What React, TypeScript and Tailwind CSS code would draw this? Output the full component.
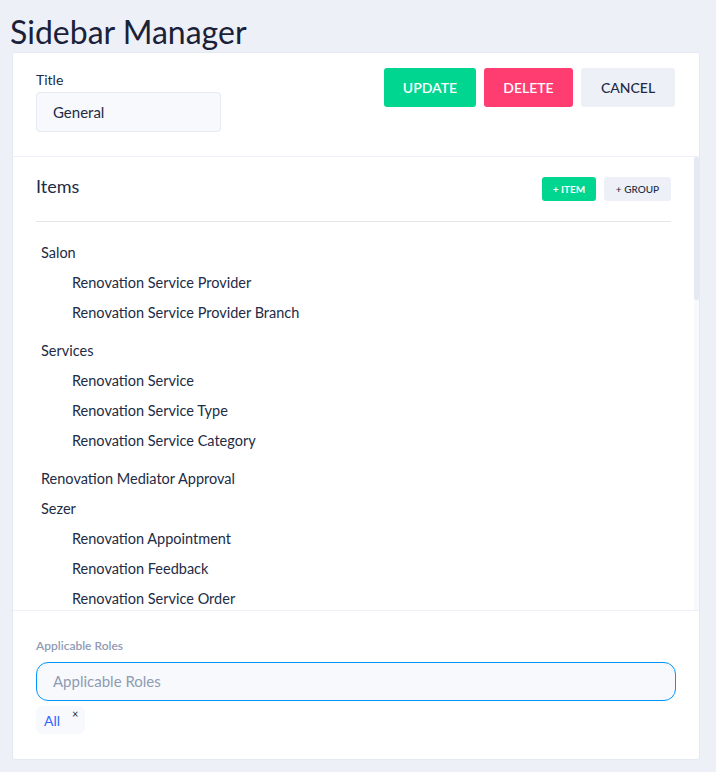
import React from 'react';

type Entry = { label: string; children?: string[] };

const entries: Entry[] = [
  { label: 'Salon', children: ['Renovation Service Provider', 'Renovation Service Provider Branch'] },
  { label: 'Services', children: ['Renovation Service', 'Renovation Service Type', 'Renovation Service Category'] },
  { label: 'Renovation Mediator Approval' },
  { label: 'Sezer', children: ['Renovation Appointment', 'Renovation Feedback', 'Renovation Service Order'] },
];

export default function App() {
  return (
    <div
      className="min-h-screen bg-[#edf0f7] pb-[14px] text-[#222b45]"
      style={{ fontFamily: 'Lato, "Open Sans", sans-serif' }}
    >
      <h1 className="pl-[10px] pt-[12px] text-[32px] leading-[40px] text-[#1a2138]">Sidebar Manager</h1>

      <div className="ml-[12px] mr-[16px] w-[688px] rounded-[3px] border border-[#e4e9f2] bg-white">
        {/* header */}
        <div className="flex items-start justify-between border-b border-[#edf1f7] px-[23px] pb-[24px] pt-[15px]">
          <div>
            <label className="block text-[14px] leading-[24px] text-[#222b45]">Title</label>
            <div className="flex h-[40px] w-[185px] items-center rounded-[4px] border border-[#e4e9f2] bg-[#f7f9fc] px-[16px] text-[15px]">
              General
            </div>
          </div>
          <div className="flex gap-[8px] pr-[1px]">
            <button className="h-[39px] w-[92px] rounded-[3px] bg-[#00d68f] text-[14px] font-semibold text-white">UPDATE</button>
            <button className="h-[39px] w-[89px] rounded-[3px] bg-[#ff3d71] text-[14px] font-semibold text-white">DELETE</button>
            <button className="h-[39px] w-[94px] rounded-[3px] bg-[#edf1f7] text-[14px] font-medium text-[#222b45]">CANCEL</button>
          </div>
        </div>

        {/* items */}
        <div className="relative h-[453px] overflow-hidden">
          <div className="pl-[23px] pr-[28px] pt-[20px]">
            <div className="flex items-start justify-between border-b border-[#e4e6ea] pb-[20px]">
              <h2 className="text-[18px] leading-[18px]">Items</h2>
              <div className="flex gap-[8px]">
                <button className="h-[24px] w-[54px] rounded-[3px] bg-[#00d68f] text-[10px] font-bold text-white">+ ITEM</button>
                <button className="h-[24px] w-[67px] rounded-[3px] bg-[#edf1f7] text-[10px] font-medium text-[#222b45]">+ GROUP</button>
              </div>
            </div>
            <div className="pl-[5px] pt-[16px] text-[14.5px]">
              {entries.map((e) => (
                <div key={e.label} className={e.children ? 'mb-[8px]' : ''}>
                  <div className="h-[30px] leading-[30px]">{e.label}</div>
                  {e.children?.map((c) => (
                    <div key={c} className="h-[30px] pl-[31px] leading-[30px]">{c}</div>
                  ))}
                </div>
              ))}
            </div>
          </div>
          {/* scrollbar */}
          <div className="absolute right-0 top-0 h-full w-[5px] bg-[#f7f9fc]">
            <div className="h-[143px] w-full rounded-[2px] bg-[#e4e9f2]" />
          </div>
        </div>

        {/* roles */}
        <div className="border-t border-[#edf1f7] px-[23px] pb-[25px] pt-[27px]">
          <label className="block text-[12px] font-semibold leading-[16px] text-[#8f9bb3]">Applicable Roles</label>
          <div className="mt-[8px] flex h-[39px] items-center rounded-[12px] border border-[#0095ff] bg-[#f7f9fc] px-[16px] text-[15px] text-[#8f9bb3]">
            Applicable Roles
          </div>
          <div className="mt-[5px] inline-flex h-[28px] items-start rounded-[6px] bg-[#f7f9fc] pl-[8px] pr-[7px]">
            <span className="pt-[5px] text-[14px] leading-[20px] text-[#3366ff]">All</span>
            <span className="ml-[12px] pt-[1px] text-[11px] leading-[14px] text-[#222b45]">×</span>
          </div>
        </div>
      </div>
    </div>
  );
}
